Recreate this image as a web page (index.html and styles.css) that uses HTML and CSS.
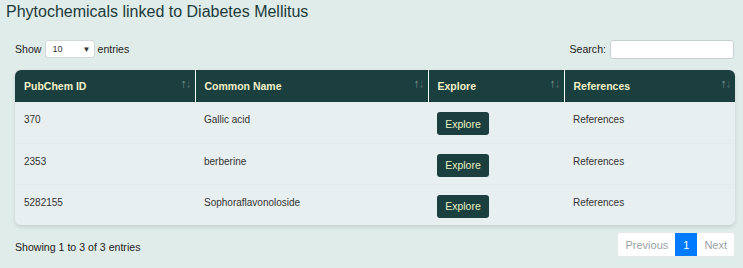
FILE: index.html
```html
<!DOCTYPE html>
<html lang="en">
<head>
    <meta charset="UTF-8">
    <meta name="viewport" content="width=device-width, initial-scale=1.0">
    <title>Phytochemicals linked to Diabetes Mellitus</title>
    <link rel="stylesheet" href="styles.css">
</head>
<body>
    <h2 class="page-title">Phytochemicals linked to Diabetes Mellitus</h2>

    <div class="table-wrapper">
        <div class="table-controls">
            <label class="length-control">
                Show
                <span class="select-box">10 <span class="select-arrow">▼</span></span>
                entries
            </label>
            <label class="search-control">
                Search:
                <input type="search" class="search-input">
            </label>
        </div>

        <div class="table-card">
            <table class="data-table">
                <thead>
                    <tr>
                        <th class="col-id">PubChem ID <span class="sort"><i class="up">↑</i><i class="down">↓</i></span></th>
                        <th class="col-name">Common Name <span class="sort"><i class="up">↑</i><i class="down">↓</i></span></th>
                        <th class="col-explore">Explore <span class="sort"><i class="up">↑</i><i class="down">↓</i></span></th>
                        <th class="col-refs">References <span class="sort"><i class="up">↑</i><i class="down">↓</i></span></th>
                    </tr>
                </thead>
                <tbody>
                    <tr>
                        <td>370</td>
                        <td>Gallic acid</td>
                        <td><button class="btn-explore">Explore</button></td>
                        <td>References</td>
                    </tr>
                    <tr>
                        <td>2353</td>
                        <td>berberine</td>
                        <td><button class="btn-explore">Explore</button></td>
                        <td>References</td>
                    </tr>
                    <tr>
                        <td>5282155</td>
                        <td>Sophoraflavonoloside</td>
                        <td><button class="btn-explore">Explore</button></td>
                        <td>References</td>
                    </tr>
                </tbody>
            </table>
        </div>

        <div class="table-footer">
            <div class="table-info">Showing 1 to 3 of 3 entries</div>
            <div class="pagination">
                <span class="page-btn disabled">Previous</span>
                <span class="page-btn current">1</span>
                <span class="page-btn disabled">Next</span>
            </div>
        </div>
    </div>
</body>
</html>
```

FILE: styles.css
```css
* {
    margin: 0;
    padding: 0;
    box-sizing: border-box;
}

body {
    background-color: #e0ecea;
    color: #333;
    font-family: "Liberation Sans", Arial, sans-serif;
    font-size: 10.6px;
}

.page-title {
    font-size: 16px;
    font-weight: normal;
    color: #1c3a3a;
    padding: 2px 0 0 6px;
    line-height: 20px;
}

.table-wrapper {
    padding: 0 9px 0 15px;
}

.table-controls {
    display: flex;
    justify-content: space-between;
    align-items: center;
    margin-top: 18px;
    height: 18px;
}

.length-control,
.search-control {
    display: flex;
    align-items: center;
    gap: 4px;
    color: #222;
}

.length-control {
    gap: 3px;
}

.select-box {
    display: inline-flex;
    justify-content: space-between;
    align-items: center;
    width: 50px;
    height: 18px;
    padding: 0 3px 0 7px;
    background: #fff;
    border: 1px solid #d3d8d8;
    border-radius: 3px;
    font-size: 9px;
    color: #333;
}

.select-arrow {
    font-size: 8px;
    color: #333;
}

.search-input {
    width: 124px;
    height: 19px;
    background: #fff;
    border: 1px solid #c8cfcf;
    border-radius: 3px;
    outline: none;
}

.table-card {
    margin-top: 12px;
    width: 720px;
    background: #e8eff1;
    border-radius: 6px;
    box-shadow: 0 2px 4px rgba(0, 0, 0, 0.12);
    overflow: hidden;
}

.data-table {
    width: 100%;
    border-collapse: collapse;
    table-layout: fixed;
}

.data-table th {
    position: relative;
    background: #1b3f3f;
    color: #f3f1c8;
    font-size: 10.5px;
    font-weight: bold;
    text-align: left;
    height: 32px;
    padding: 0 8px 0 9px;
    border-left: 1px solid #ffffff;
}

.data-table th:first-child {
    border-left: none;
}

.col-id { width: 180px; }
.col-name { width: 233px; }
.col-explore { width: 136px; }

/* sort indicator: two thin arrows, the down one a bit darker */
.sort {
    position: absolute;
    right: 6px;
    top: 9px;
    display: flex;
    font-family: "DejaVu Sans", sans-serif;
    font-size: 10px;
    font-weight: normal;
    line-height: 12px;
}

.sort i {
    font-style: normal;
    display: block;
    width: 4px;
    overflow: visible;
    transform: scaleX(0.7);
}

.sort .up {
    color: #6f8786;
}

.sort .down {
    color: #4a6665;
    margin-left: 1px;
}

.data-table td {
    height: 41px;
    padding: 12px 8px 0 9px;
    vertical-align: top;
    font-size: 10px;
    color: #333;
    border-top: 1px solid #e2eaeb;
}

.data-table tbody tr:first-child td {
    border-top: none;
}

.data-table td:nth-child(3) {
    padding-top: 10px;
}

.btn-explore {
    background: #1b3f3f;
    color: #e6f1c2;
    border: none;
    border-radius: 3px;
    font-family: "Liberation Sans", Arial, sans-serif;
    font-size: 10.5px;
    height: 23px;
    width: 52px;
}

.table-footer {
    display: flex;
    justify-content: space-between;
    align-items: flex-start;
    margin-top: 7px;
    width: 720px;
}

.table-info {
    padding-top: 9px;
    color: #222;
}

.pagination {
    display: flex;
    background: #fff;
    border-radius: 3px;
    border: 1px solid #e6eaea;
    overflow: hidden;
    height: 25px;
}

.page-btn {
    display: flex;
    align-items: center;
    padding: 0 7px;
    font-size: 11px;
}

.page-btn.disabled {
    color: #9aa3a8;
}

.page-btn.current {
    background: #007bff;
    color: #fff;
    padding: 0 8px;
}
```
